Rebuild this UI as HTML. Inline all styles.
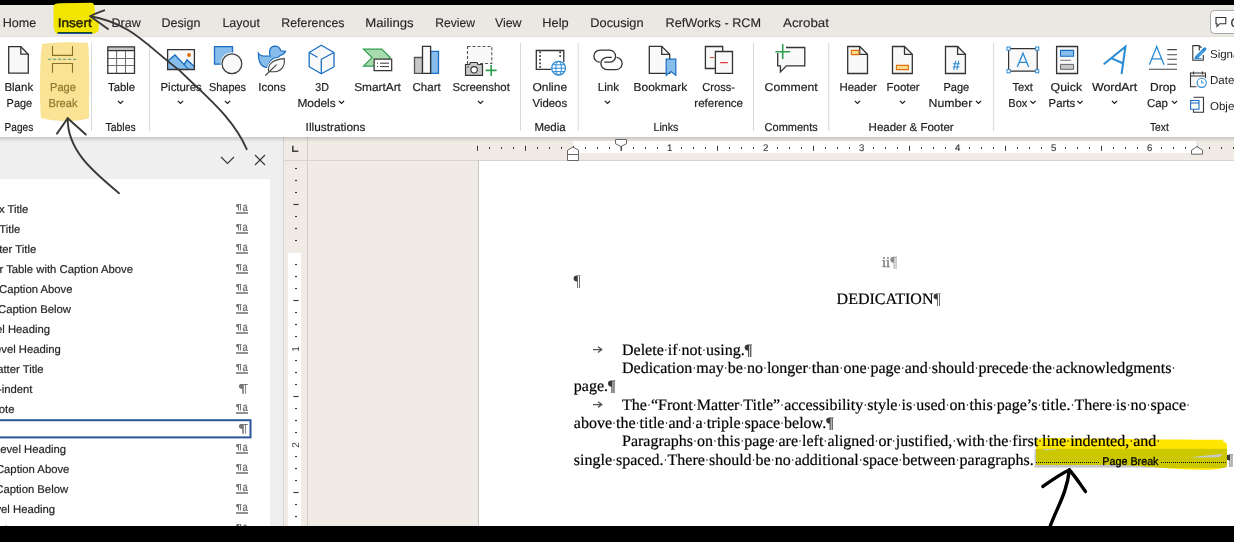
<!DOCTYPE html>
<html><head><meta charset="utf-8"><title>Word</title>
<style>html,body{margin:0;padding:0;width:1234px;height:542px;overflow:hidden;background:#fff}svg{display:block}</style>
</head><body>
<svg width="1234" height="542" viewBox="0 0 1234 542" text-rendering="geometricPrecision">
<rect x="0" y="0" width="1234" height="542" fill="#ffffff" />
<rect x="0" y="5" width="1234" height="31" fill="#ebe7e3" />
<rect x="0" y="36" width="1234" height="1" fill="#e3dfdb" />
<rect x="0" y="37" width="1234" height="100" fill="#ffffff" />
<rect x="0" y="137" width="284" height="389" fill="#efefef" />
<rect x="0" y="179" width="270" height="347" fill="#ffffff" />
<rect x="284" y="137" width="950" height="389" fill="#f0ebe5" />
<rect x="573" y="141" width="623" height="12" fill="#ffffff" />
<rect x="284" y="160" width="950" height="1" fill="#d6d4d2" />
<rect x="283" y="137" width="1" height="389" fill="#d4d4d4" />
<rect x="307" y="137" width="1" height="389" fill="#d2cfcb" />
<rect x="479" y="161" width="755" height="365" fill="#ffffff" />
<rect x="478" y="161" width="1" height="365" fill="#c9c6c2" />
<rect x="288" y="253" width="13" height="273" fill="#ffffff" />
<defs><linearGradient id="shd" x1="0" y1="0" x2="0" y2="1"><stop offset="0" stop-color="#000" stop-opacity="0.16"/><stop offset="1" stop-color="#000" stop-opacity="0"/></linearGradient></defs>
<rect x="0" y="137" width="1234" height="5" fill="url(#shd)" />
<text x="2.8" y="26.7" font-family="Liberation Sans" font-size="12.5" fill="#262626" textLength="33.5" lengthAdjust="spacingAndGlyphs" stroke="#262626" stroke-width="0.12" >Home</text>
<text x="111.6" y="26.7" font-family="Liberation Sans" font-size="12.5" fill="#262626" textLength="29.1" lengthAdjust="spacingAndGlyphs" stroke="#262626" stroke-width="0.12" >Draw</text>
<text x="161.6" y="26.7" font-family="Liberation Sans" font-size="12.5" fill="#262626" textLength="38.9" lengthAdjust="spacingAndGlyphs" stroke="#262626" stroke-width="0.12" >Design</text>
<text x="222.4" y="26.7" font-family="Liberation Sans" font-size="12.5" fill="#262626" textLength="37.5" lengthAdjust="spacingAndGlyphs" stroke="#262626" stroke-width="0.12" >Layout</text>
<text x="281.3" y="26.7" font-family="Liberation Sans" font-size="12.5" fill="#262626" textLength="63.2" lengthAdjust="spacingAndGlyphs" stroke="#262626" stroke-width="0.12" >References</text>
<text x="365.3" y="26.7" font-family="Liberation Sans" font-size="12.5" fill="#262626" textLength="48.4" lengthAdjust="spacingAndGlyphs" stroke="#262626" stroke-width="0.12" >Mailings</text>
<text x="435.2" y="26.7" font-family="Liberation Sans" font-size="12.5" fill="#262626" textLength="39.7" lengthAdjust="spacingAndGlyphs" stroke="#262626" stroke-width="0.12" >Review</text>
<text x="494.9" y="26.7" font-family="Liberation Sans" font-size="12.5" fill="#262626" textLength="26.7" lengthAdjust="spacingAndGlyphs" stroke="#262626" stroke-width="0.12" >View</text>
<text x="542.3" y="26.7" font-family="Liberation Sans" font-size="12.5" fill="#262626" textLength="26.3" lengthAdjust="spacingAndGlyphs" stroke="#262626" stroke-width="0.12" >Help</text>
<text x="590.3" y="26.7" font-family="Liberation Sans" font-size="12.5" fill="#262626" textLength="53.3" lengthAdjust="spacingAndGlyphs" stroke="#262626" stroke-width="0.12" >Docusign</text>
<text x="665.5" y="26.7" font-family="Liberation Sans" font-size="12.5" fill="#262626" textLength="95.5" lengthAdjust="spacingAndGlyphs" stroke="#262626" stroke-width="0.12" >RefWorks - RCM</text>
<text x="783" y="26.7" font-family="Liberation Sans" font-size="12.5" fill="#262626" textLength="46" lengthAdjust="spacingAndGlyphs" stroke="#262626" stroke-width="0.12" >Acrobat</text>
<rect x="0" y="0" width="1234" height="5" fill="#000000" />
<path d="M53.5,6 C54,4 56,3.2 60,3.2 L92,2.8 C94,3.5 94.8,6 94.8,10 L95,19.5 L99,21 L98.5,31 L94,33.8 L57,34 C55,33 54,30 53.6,26 Z" fill="#f2e500"/>
<text x="57.7" y="26.7" font-family="Liberation Sans" font-size="12.5" fill="#2a2700" textLength="34" lengthAdjust="spacingAndGlyphs" stroke="#2a2700" stroke-width="0.5" >Insert</text>
<rect x="57.6" y="32" width="34.7" height="1" fill="#1f4a1a" />
<rect x="57.6" y="33" width="34.7" height="1" fill="#1c55a0" />
<rect x="0" y="526" width="1234" height="16" fill="#000000" />
<rect x="1210.5" y="10.5" width="40" height="23" rx="4" fill="#ffffff" stroke="#a8a8a8"/>
<path d="M1216,17.5 h9.8 v6.2 h-6 l-2.8,2.8 v-2.8 h-1 z" fill="none" stroke="#333" stroke-width="1.1"/>
<text x="1230.5" y="26.7" font-family="Liberation Sans" font-size="12.5" fill="#262626" stroke="#262626" stroke-width="0.2" >Comments</text>
<text x="4.4" y="90.8" font-family="Liberation Sans" font-size="11.5" fill="#1c1c1c" textLength="28.8" lengthAdjust="spacingAndGlyphs" stroke="#1c1c1c" stroke-width="0.18" >Blank</text>
<text x="6.6" y="106.6" font-family="Liberation Sans" font-size="11.5" fill="#1c1c1c" textLength="25.5" lengthAdjust="spacingAndGlyphs" stroke="#1c1c1c" stroke-width="0.18" >Page</text>
<text x="108" y="90.8" font-family="Liberation Sans" font-size="11.5" fill="#1c1c1c" textLength="27" lengthAdjust="spacingAndGlyphs" stroke="#1c1c1c" stroke-width="0.18" >Table</text>
<text x="160.5" y="90.8" font-family="Liberation Sans" font-size="11.5" fill="#1c1c1c" textLength="41.2" lengthAdjust="spacingAndGlyphs" stroke="#1c1c1c" stroke-width="0.18" >Pictures</text>
<text x="209" y="90.8" font-family="Liberation Sans" font-size="11.5" fill="#1c1c1c" textLength="37" lengthAdjust="spacingAndGlyphs" stroke="#1c1c1c" stroke-width="0.18" >Shapes</text>
<text x="258.3" y="90.8" font-family="Liberation Sans" font-size="11.5" fill="#1c1c1c" textLength="27.3" lengthAdjust="spacingAndGlyphs" stroke="#1c1c1c" stroke-width="0.18" >Icons</text>
<text x="315.3" y="90.8" font-family="Liberation Sans" font-size="11.5" fill="#1c1c1c" textLength="13.6" lengthAdjust="spacingAndGlyphs" stroke="#1c1c1c" stroke-width="0.18" >3D</text>
<text x="297.4" y="106.6" font-family="Liberation Sans" font-size="11.5" fill="#1c1c1c" textLength="38.3" lengthAdjust="spacingAndGlyphs" stroke="#1c1c1c" stroke-width="0.18" >Models</text>
<text x="354.2" y="90.8" font-family="Liberation Sans" font-size="11.5" fill="#1c1c1c" textLength="46.7" lengthAdjust="spacingAndGlyphs" stroke="#1c1c1c" stroke-width="0.18" >SmartArt</text>
<text x="412.5" y="90.8" font-family="Liberation Sans" font-size="11.5" fill="#1c1c1c" textLength="28.2" lengthAdjust="spacingAndGlyphs" stroke="#1c1c1c" stroke-width="0.18" >Chart</text>
<text x="452.4" y="90.8" font-family="Liberation Sans" font-size="11.5" fill="#1c1c1c" textLength="57.4" lengthAdjust="spacingAndGlyphs" stroke="#1c1c1c" stroke-width="0.18" >Screenshot</text>
<text x="532.5" y="90.8" font-family="Liberation Sans" font-size="11.5" fill="#1c1c1c" textLength="34.6" lengthAdjust="spacingAndGlyphs" stroke="#1c1c1c" stroke-width="0.18" >Online</text>
<text x="532.5" y="106.6" font-family="Liberation Sans" font-size="11.5" fill="#1c1c1c" textLength="34.6" lengthAdjust="spacingAndGlyphs" stroke="#1c1c1c" stroke-width="0.18" >Videos</text>
<text x="597.7" y="90.8" font-family="Liberation Sans" font-size="11.5" fill="#1c1c1c" textLength="21.3" lengthAdjust="spacingAndGlyphs" stroke="#1c1c1c" stroke-width="0.18" >Link</text>
<text x="633.6" y="90.8" font-family="Liberation Sans" font-size="11.5" fill="#1c1c1c" textLength="53.5" lengthAdjust="spacingAndGlyphs" stroke="#1c1c1c" stroke-width="0.18" >Bookmark</text>
<text x="702.3" y="90.8" font-family="Liberation Sans" font-size="11.5" fill="#1c1c1c" textLength="32.7" lengthAdjust="spacingAndGlyphs" stroke="#1c1c1c" stroke-width="0.18" >Cross-</text>
<text x="694.3" y="106.6" font-family="Liberation Sans" font-size="11.5" fill="#1c1c1c" textLength="48.7" lengthAdjust="spacingAndGlyphs" stroke="#1c1c1c" stroke-width="0.18" >reference</text>
<text x="764.6" y="90.8" font-family="Liberation Sans" font-size="11.5" fill="#1c1c1c" textLength="53.1" lengthAdjust="spacingAndGlyphs" stroke="#1c1c1c" stroke-width="0.18" >Comment</text>
<text x="839.4" y="90.8" font-family="Liberation Sans" font-size="11.5" fill="#1c1c1c" textLength="37.4" lengthAdjust="spacingAndGlyphs" stroke="#1c1c1c" stroke-width="0.18" >Header</text>
<text x="886.6" y="90.8" font-family="Liberation Sans" font-size="11.5" fill="#1c1c1c" textLength="33" lengthAdjust="spacingAndGlyphs" stroke="#1c1c1c" stroke-width="0.18" >Footer</text>
<text x="943.4" y="90.8" font-family="Liberation Sans" font-size="11.5" fill="#1c1c1c" textLength="25.8" lengthAdjust="spacingAndGlyphs" stroke="#1c1c1c" stroke-width="0.18" >Page</text>
<text x="928.5" y="106.6" font-family="Liberation Sans" font-size="11.5" fill="#1c1c1c" textLength="43.8" lengthAdjust="spacingAndGlyphs" stroke="#1c1c1c" stroke-width="0.18" >Number</text>
<text x="1012.4" y="90.8" font-family="Liberation Sans" font-size="11.5" fill="#1c1c1c" textLength="20.4" lengthAdjust="spacingAndGlyphs" stroke="#1c1c1c" stroke-width="0.18" >Text</text>
<text x="1008.3" y="106.6" font-family="Liberation Sans" font-size="11.5" fill="#1c1c1c" textLength="19" lengthAdjust="spacingAndGlyphs" stroke="#1c1c1c" stroke-width="0.18" >Box</text>
<text x="1050.6" y="90.8" font-family="Liberation Sans" font-size="11.5" fill="#1c1c1c" textLength="31.6" lengthAdjust="spacingAndGlyphs" stroke="#1c1c1c" stroke-width="0.18" >Quick</text>
<text x="1048.6" y="106.6" font-family="Liberation Sans" font-size="11.5" fill="#1c1c1c" textLength="26.5" lengthAdjust="spacingAndGlyphs" stroke="#1c1c1c" stroke-width="0.18" >Parts</text>
<text x="1091.9" y="90.8" font-family="Liberation Sans" font-size="11.5" fill="#1c1c1c" textLength="45.3" lengthAdjust="spacingAndGlyphs" stroke="#1c1c1c" stroke-width="0.18" >WordArt</text>
<text x="1150" y="90.8" font-family="Liberation Sans" font-size="11.5" fill="#1c1c1c" textLength="26" lengthAdjust="spacingAndGlyphs" stroke="#1c1c1c" stroke-width="0.18" >Drop</text>
<text x="1147" y="106.6" font-family="Liberation Sans" font-size="11.5" fill="#1c1c1c" textLength="21" lengthAdjust="spacingAndGlyphs" stroke="#1c1c1c" stroke-width="0.18" >Cap</text>
<text x="4.6" y="130.7" font-family="Liberation Sans" font-size="11.5" fill="#1c1c1c" textLength="28.6" lengthAdjust="spacingAndGlyphs" stroke="#1c1c1c" stroke-width="0.18" >Pages</text>
<text x="105.6" y="130.7" font-family="Liberation Sans" font-size="11.5" fill="#1c1c1c" textLength="30" lengthAdjust="spacingAndGlyphs" stroke="#1c1c1c" stroke-width="0.18" >Tables</text>
<text x="305.6" y="130.7" font-family="Liberation Sans" font-size="11.5" fill="#1c1c1c" textLength="59.9" lengthAdjust="spacingAndGlyphs" stroke="#1c1c1c" stroke-width="0.18" >Illustrations</text>
<text x="534.4" y="130.7" font-family="Liberation Sans" font-size="11.5" fill="#1c1c1c" textLength="31.2" lengthAdjust="spacingAndGlyphs" stroke="#1c1c1c" stroke-width="0.18" >Media</text>
<text x="653.5" y="130.7" font-family="Liberation Sans" font-size="11.5" fill="#1c1c1c" textLength="24.9" lengthAdjust="spacingAndGlyphs" stroke="#1c1c1c" stroke-width="0.18" >Links</text>
<text x="764.6" y="130.7" font-family="Liberation Sans" font-size="11.5" fill="#1c1c1c" textLength="53.1" lengthAdjust="spacingAndGlyphs" stroke="#1c1c1c" stroke-width="0.18" >Comments</text>
<text x="868.6" y="130.7" font-family="Liberation Sans" font-size="11.5" fill="#1c1c1c" textLength="85.1" lengthAdjust="spacingAndGlyphs" stroke="#1c1c1c" stroke-width="0.18" >Header &amp; Footer</text>
<text x="1150" y="130.7" font-family="Liberation Sans" font-size="11.5" fill="#1c1c1c" textLength="18.8" lengthAdjust="spacingAndGlyphs" stroke="#1c1c1c" stroke-width="0.18" >Text</text>
<text x="1210" y="58" font-family="Liberation Sans" font-size="11.5" fill="#1c1c1c" >Signature Line</text>
<text x="1210" y="84" font-family="Liberation Sans" font-size="11.5" fill="#1c1c1c" >Date &amp; Time</text>
<text x="1210" y="110" font-family="Liberation Sans" font-size="11.5" fill="#1c1c1c" >Object</text>
<rect x="91.0" y="43" width="1" height="88" fill="#d9d9d9" />
<rect x="149.0" y="43" width="1" height="88" fill="#d9d9d9" />
<rect x="520.0" y="43" width="1" height="88" fill="#d9d9d9" />
<rect x="577.7" y="43" width="1" height="88" fill="#d9d9d9" />
<rect x="753.0" y="43" width="1" height="88" fill="#d9d9d9" />
<rect x="828.2" y="43" width="1" height="88" fill="#d9d9d9" />
<rect x="993.1" y="43" width="1" height="88" fill="#d9d9d9" />
<path d="M117.9,100.9 L120.5,103.5 L123.1,100.9" fill="none" stroke="#1c1c1c" stroke-width="1.2"/>
<path d="M177.9,100.9 L180.5,103.5 L183.1,100.9" fill="none" stroke="#1c1c1c" stroke-width="1.2"/>
<path d="M224.9,100.9 L227.5,103.5 L230.1,100.9" fill="none" stroke="#1c1c1c" stroke-width="1.2"/>
<path d="M338.9,100.9 L341.5,103.5 L344.1,100.9" fill="none" stroke="#1c1c1c" stroke-width="1.2"/>
<path d="M477.9,100.9 L480.5,103.5 L483.1,100.9" fill="none" stroke="#1c1c1c" stroke-width="1.2"/>
<path d="M604.9,100.9 L607.5,103.5 L610.1,100.9" fill="none" stroke="#1c1c1c" stroke-width="1.2"/>
<path d="M854.9,100.9 L857.5,103.5 L860.1,100.9" fill="none" stroke="#1c1c1c" stroke-width="1.2"/>
<path d="M899.9,100.9 L902.5,103.5 L905.1,100.9" fill="none" stroke="#1c1c1c" stroke-width="1.2"/>
<path d="M975.9,100.9 L978.5,103.5 L981.1,100.9" fill="none" stroke="#1c1c1c" stroke-width="1.2"/>
<path d="M1030.4,100.9 L1033,103.5 L1035.6,100.9" fill="none" stroke="#1c1c1c" stroke-width="1.2"/>
<path d="M1077.4,100.9 L1080,103.5 L1082.6,100.9" fill="none" stroke="#1c1c1c" stroke-width="1.2"/>
<path d="M1111.9,100.9 L1114.5,103.5 L1117.1,100.9" fill="none" stroke="#1c1c1c" stroke-width="1.2"/>
<path d="M1171.9,100.9 L1174.5,103.5 L1177.1,100.9" fill="none" stroke="#1c1c1c" stroke-width="1.2"/>
<path d="M8.7,46.7 H20.8 L28.3,54.2 V73.1 H8.7 Z" fill="#f9f9f9" stroke="#333333" stroke-width="1.3" stroke-linejoin="miter" />
<path d="M20.8,46.7 V54.2 H28.3" fill="none" stroke="#333333" stroke-width="1.3" stroke-linejoin="miter" />
<rect x="107.5" y="46.5" width="27" height="4" fill="#c6c6c6" />
<path d="M108,58.5 H134.3 M108,65.5 H134.3 M116.6,51 V73 M125.5,51 V73" fill="none" stroke="#707070" stroke-width="1.1" stroke-linejoin="miter" />
<path d="M107.8,46.8 H134.5 V73.3 H107.8 Z M107.8,50.6 H134.5" fill="none" stroke="#333333" stroke-width="1.3" stroke-linejoin="miter" />
<rect x="168" y="50" width="26" height="19" fill="#f9f9f9" />
<path d="M168,61 L175,55 L188.5,69.3 M184,64.5 L187,60 L194.2,66.5" fill="none" stroke="#1b6ec2" stroke-width="1.2" stroke-linejoin="miter" />
<path d="M168,61 L175,55 L184,64.5 L187,60 L194.2,66.5 V69.3 H168 Z" fill="#86bdea"/>
<path d="M168,61 L175,55 L188.5,69.3 M184.5,64.5 L187,60 L194.2,66.5" fill="none" stroke="#1b6ec2" stroke-width="1.2" stroke-linejoin="miter" />
<path d="M167.6,49.6 H194.4 V69.5 H167.6 Z" fill="none" stroke="#333333" stroke-width="1.3" stroke-linejoin="miter" />
<circle cx="189" cy="55" r="2" fill="#e0700f"/>
<path d="M214.5,46.7 H232.5 V55 A10,10 0 0 0 222,64.2 H214.5 Z" fill="#86bdea" stroke="#1b6ec2" stroke-width="1.3"/>
<circle cx="231.9" cy="63.8" r="11.3" fill="#ffffff"/>
<circle cx="231.9" cy="63.8" r="9.9" fill="#f9f9f9" stroke="#444" stroke-width="1.3"/>
<path d="M258.4,53.2 C259.5,55.2 262,56.2 266,56.2 L270.5,56 C269.3,54.5 269.3,52.5 269.6,50.8 C270.3,47.3 273,46.2 275.4,46.2 C278.5,46.4 280.2,48.6 280.8,50.8 L285.5,51.3 C284.5,53.5 282.5,55 280,55.5 C279,57.5 276.5,58 274,58 C270.5,60 268.5,63 267.2,67.5 C261,67 258.3,62 258.4,53.2 Z" fill="#86bdea" stroke="#1b6ec2" stroke-width="1.2"/>
<path d="M268.6,71 C267.5,64.5 272,59.8 284.2,58.6 C285.2,66 281.5,71.5 274,71.8 C271.5,71.9 269.8,71.6 268.6,71 Z" fill="#f9f9f9" stroke="#f9f9f9" stroke-width="3"/>
<path d="M268.6,71 C267.5,64.5 272,59.8 284.2,58.6 C285.2,66 281.5,71.5 274,71.8 C271.5,71.9 269.8,71.6 268.6,71 Z M265.3,75.5 L276.6,64.6" fill="none" stroke="#444" stroke-width="1.1"/>
<path d="M321.3,45.2 L334,52.5 V66.7 L321.3,73.8 L309.2,66.7 V52.5 Z" fill="#f9f9f9" stroke="#1b6ec2" stroke-width="1.3" stroke-linejoin="round"/>
<path d="M309.2,52.5 L317.5,57.3 M321.3,59.3 L334,52.5 M321.3,59.3 V73.8" fill="none" stroke="#1b6ec2" stroke-width="1.3" stroke-linejoin="miter" />
<path d="M363.5,49.1 H381.7 L390.3,57.6 L381.7,66.1 H363.5 L372,57.6 Z" fill="#a8dcae" stroke="#2f9e4f" stroke-width="1.2"/>
<path d="M374.1,59.1 H391.7 V70.6 H374.1 Z" fill="#ffffff" stroke="#333333" stroke-width="1.2" stroke-linejoin="miter" />
<path d="M380,63.2 H389 M380,66.6 H389" fill="none" stroke="#333333" stroke-width="1" stroke-linejoin="miter" />
<rect x="377" y="62.7" width="1" height="1" fill="#333333" />
<rect x="377" y="66.1" width="1" height="1" fill="#333333" />
<path d="M414.5,57.5 H422.5 V73.3 H414.5 Z" fill="#c8c8c8" stroke="#555" stroke-width="1.3" stroke-linejoin="miter" />
<path d="M430.6,51.3 H438.5 V73.3 H430.6 Z" fill="#86bdea" stroke="#1b6ec2" stroke-width="1.3" stroke-linejoin="miter" />
<path d="M422.5,46.4 H430.6 V73.3 H422.5 Z" fill="#f9f9f9" stroke="#333333" stroke-width="1.3" stroke-linejoin="miter" />
<rect x="467.5" y="46.5" width="24.3" height="17" fill="#f9f9f9" stroke="#555" stroke-width="1.1" stroke-dasharray="3,2"/>
<path d="M465.5,64.5 H469.5 L470.5,62.5 H477 L478,64.5 H482.5 V75.3 H465.5 Z" fill="#c8c8c8" stroke="#333333" stroke-width="1.2"/>
<circle cx="474.1" cy="69.8" r="3.2" fill="#fff" stroke="#333333" stroke-width="1.1"/>
<rect x="467.3" y="66.2" width="1.3" height="1.3" fill="#333333" />
<path d="M485.7,70.4 H496.6 M491.2,64.9 V75.9" fill="none" stroke="#2f9e4f" stroke-width="1.6" stroke-linejoin="miter" />
<path d="M563.8,62 V50.5 H536.3 V69.3 H551" fill="none" stroke="#333333" stroke-width="1.3" stroke-linejoin="miter" />
<rect x="539.2" y="51.5" width="1.7" height="1.7" fill="#333333" />
<rect x="539.2" y="55.2" width="1.7" height="1.7" fill="#333333" />
<rect x="539.2" y="58.800000000000004" width="1.7" height="1.7" fill="#333333" />
<rect x="539.2" y="62.5" width="1.7" height="1.7" fill="#333333" />
<rect x="539.2" y="66.10000000000001" width="1.7" height="1.7" fill="#333333" />
<rect x="559.3" y="51.5" width="1.7" height="1.7" fill="#333333" />
<rect x="559.3" y="55.2" width="1.7" height="1.7" fill="#333333" />
<circle cx="558.6" cy="68.2" r="7.6" fill="#fff"/>
<circle cx="558.6" cy="68.2" r="6.9" fill="none" stroke="#2a8ad4" stroke-width="1.3"/>
<path d="M552,68.2 H565.2 M553.2,64.8 H564 M553.2,71.6 H564" fill="none" stroke="#2a8ad4" stroke-width="1" stroke-linejoin="miter" />
<ellipse cx="558.6" cy="68.2" rx="2.8" ry="6.9" fill="none" stroke="#2a8ad4" stroke-width="1"/>
<path d="M604.2,62.2 H609.5 A6.05,6.05 0 0 0 609.5,50.1 H600 A6.05,6.05 0 0 0 599.9,62.2" fill="none" stroke="#333333" stroke-width="1.3" stroke-linejoin="miter" />
<path d="M611.9,57.4 H607 A6.1,6.1 0 0 0 607,69.6 H615.6 A6.1,6.1 0 0 0 616.5,57.4" fill="none" stroke="#333333" stroke-width="1.3" stroke-linejoin="miter" />
<path d="M649.3,46.3 H661.7 L669.7,54.3 V73.3 H649.3 Z" fill="#f9f9f9" stroke="#333333" stroke-width="1.3" stroke-linejoin="miter" />
<path d="M661.7,46.3 V54.3 H669.7" fill="none" stroke="#333333" stroke-width="1.3" stroke-linejoin="miter" />
<path d="M666.2,59.2 H675.8 V75.3 L671,71.6 L666.2,75.3 Z" fill="#86bdea" stroke="#1b6ec2" stroke-width="1.2"/>
<path d="M666.2,60 V73.3" stroke="#f9f9f9" stroke-width="0"/>
<path d="M722.7,51 V46.5 H705.4 V68.5 H715" fill="#f9f9f9" stroke="#333333" stroke-width="1.3" stroke-linejoin="miter" />
<path d="M715.4,51.5 H732.5 V73.4 H715.4 Z" fill="#f9f9f9" stroke="#333333" stroke-width="1.3" stroke-linejoin="miter" />
<path d="M710,57.5 H714 M720.1,62.6 H727.9" fill="none" stroke="#e03a3a" stroke-width="1.1" stroke-linejoin="miter" />
<path d="M786,47.5 H804.8 V65.8 H786.4 L780.4,72 V65.8 H777.7 V53" fill="#f9f9f9" stroke="#333333" stroke-width="1.3" stroke-linejoin="miter" />
<path d="M775.3,51.7 H790.1 M782.7,44.1 V59" fill="none" stroke="#2f9e4f" stroke-width="1.6" stroke-linejoin="miter" />
<path d="M847.7,46.5 H859.7 L867.5,54.3 V73.5 H847.7 Z" fill="#f9f9f9" stroke="#333333" stroke-width="1.3" stroke-linejoin="miter" />
<path d="M859.7,46.5 V54.3 H867.5" fill="none" stroke="#333333" stroke-width="1.3" stroke-linejoin="miter" />
<path d="M851.3,50.4 H859 V54.6 H851.3 Z" fill="#f8d98a" stroke="#e0700f" stroke-width="1.1" stroke-linejoin="miter" />
<path d="M892.5,46.5 H904.5 L912.3,54.3 V73.5 H892.5 Z" fill="#f9f9f9" stroke="#333333" stroke-width="1.3" stroke-linejoin="miter" />
<path d="M904.5,46.5 V54.3 H912.3" fill="none" stroke="#333333" stroke-width="1.3" stroke-linejoin="miter" />
<path d="M896.4,65.4 H908.4 V69.6 H896.4 Z" fill="#f8d98a" stroke="#e0700f" stroke-width="1.1" stroke-linejoin="miter" />
<path d="M945.5,46.5 H957.6 L965.4,54.3 V73.5 H945.5 Z" fill="#f9f9f9" stroke="#333333" stroke-width="1.3" stroke-linejoin="miter" />
<path d="M957.6,46.5 V54.3 H965.4" fill="none" stroke="#333333" stroke-width="1.3" stroke-linejoin="miter" />
<text x="956.2" y="70.3" font-family="Liberation Sans" font-size="13.5" fill="#2a8ad4" font-weight="bold" text-anchor="middle" >#</text>
<path d="M1008.6,48.6 H1037.2 V71.2 H1008.6 Z" fill="#f9f9f9" stroke="#333333" stroke-width="1.2" stroke-linejoin="miter" />
<rect x="1007.0" y="47.0" width="3.2" height="3.2" fill="#fff" stroke="#2a8ad4" stroke-width="1"/>
<rect x="1035.6000000000001" y="47.0" width="3.2" height="3.2" fill="#fff" stroke="#2a8ad4" stroke-width="1"/>
<rect x="1007.0" y="69.60000000000001" width="3.2" height="3.2" fill="#fff" stroke="#2a8ad4" stroke-width="1"/>
<rect x="1035.6000000000001" y="69.60000000000001" width="3.2" height="3.2" fill="#fff" stroke="#2a8ad4" stroke-width="1"/>
<path d="M1017.3,66.9 L1023,53.3 L1028.7,66.9 M1019.2,62.3 H1026.8" fill="none" stroke="#2a8ad4" stroke-width="1.3" stroke-linejoin="miter" />
<path d="M1056.6,46.5 H1077.6 V73.5 H1056.6 Z" fill="#f9f9f9" stroke="#333333" stroke-width="1.3" stroke-linejoin="miter" />
<path d="M1060.5,50.4 H1073.6 V56.3 H1060.5 Z" fill="#86bdea" stroke="#1b6ec2" stroke-width="1.1" stroke-linejoin="miter" />
<path d="M1060.3,60.3 H1070.8" fill="none" stroke="#777" stroke-width="1" stroke-linejoin="miter" />
<path d="M1060.5,64.4 H1073.6 V69.3 H1060.5 Z" fill="#c8c8c8" stroke="#666" stroke-width="1" stroke-linejoin="miter" />
<path d="M1104.3,63.7 L1125.4,46.8 L1121.7,73.2 M1111.7,58.4 L1122.8,63.2" fill="none" stroke="#2a8ad4" stroke-width="2.1" stroke-linejoin="miter" stroke-linecap="round" stroke-linejoin="round"/>
<path d="M1149.4,64.8 L1156.7,46.4 L1164,64.8 M1151.8,58.8 H1161.6" fill="none" stroke="#2a8ad4" stroke-width="1.3" stroke-linejoin="miter" />
<path d="M1167.3,49.6 H1176.9 M1167.3,54.7 H1176.9 M1167.3,59.2 H1176.9 M1167.3,64.3 H1176.9 M1149,69.2 H1177" fill="none" stroke="#444" stroke-width="1.1" stroke-linejoin="miter" />
<path d="M1199.3,45.6 H1192.8 V60.3 H1203.3 V55" fill="none" stroke="#333333" stroke-width="1.1" stroke-linejoin="miter" />
<path d="M1199.3,45.6 V50.5 M1199.3,45.6 L1201.6,47.8" fill="none" stroke="#333333" stroke-width="1.1" stroke-linejoin="miter" />
<path d="M1196.5,57.3 L1204.8,49" stroke="#2a8ad4" stroke-width="3.2" stroke-linecap="round"/>
<path d="M1198.5,55.3 L1203.6,50.2" stroke="#ffffff" stroke-width="0.8" stroke-dasharray="0.8,1"/>
<path d="M1195.2,58.6 L1197,55.5 L1198.5,57.2 Z" fill="#2a8ad4"/>
<path d="M1194.3,58.6 H1201.6" fill="none" stroke="#2a8ad4" stroke-width="1.1" stroke-linejoin="miter" />
<path d="M1205.5,78 V73 H1190.5 V86.7 H1196.5 M1190.5,76 H1205.5" fill="#f9f9f9" stroke="#333333" stroke-width="1.1" stroke-linejoin="miter" />
<path d="M1193.5,71.5 V74.5 M1202.5,71.5 V74.5" fill="none" stroke="#333333" stroke-width="1.1" stroke-linejoin="miter" />
<circle cx="1201.7" cy="82.8" r="4.6" fill="#fff" stroke="#2a8ad4" stroke-width="1.1"/>
<path d="M1201.7,80.3 V83 H1203.8" fill="none" stroke="#2a8ad4" stroke-width="1" stroke-linejoin="miter" />
<path d="M1193.5,97.3 H1203.5 V112.3 H1193.5 V109.5" fill="none" stroke="#333333" stroke-width="1.1" stroke-linejoin="miter" />
<path d="M1190.6,100.5 H1199 V109.2 H1190.6 Z M1190.6,103 H1199" fill="#f9f9f9" stroke="#1b6ec2" stroke-width="1.1" stroke-linejoin="miter" />
<path d="M221,157 L227.5,163.5 L234,157" fill="none" stroke="#333" stroke-width="1.1"/>
<path d="M255,155 L265,165 M265,155 L255,165" fill="none" stroke="#333" stroke-width="1.1"/>
<text x="28.4" y="212.8" font-family="Liberation Sans" font-size="11.3" fill="#262626" text-anchor="end" stroke="#262626" stroke-width="0.2" >Appendix Title</text>
<path d="M237.3,204.10000000000002 H241.3 V204.8 H241 V210.60000000000002 H240 V204.8 H239 V210.60000000000002 H238 V207.4 C236.7,207.4 236,206.60000000000002 236,205.8 C236,204.9 236.6,204.10000000000002 237.3,204.10000000000002 Z" fill="#767676"/>
<text x="242.6" y="210.60000000000002" font-family="Liberation Sans" font-size="12" fill="#767676" textLength="5.3" lengthAdjust="spacingAndGlyphs" font-weight="bold" >a</text>
<rect x="236" y="212.20000000000002" width="12" height="1.6" fill="#767676" />
<text x="20.2" y="232.8" font-family="Liberation Sans" font-size="11.3" fill="#262626" text-anchor="end" stroke="#262626" stroke-width="0.2" >Title</text>
<path d="M237.3,224.10000000000002 H241.3 V224.8 H241 V230.60000000000002 H240 V224.8 H239 V230.60000000000002 H238 V227.4 C236.7,227.4 236,226.60000000000002 236,225.8 C236,224.9 236.6,224.10000000000002 237.3,224.10000000000002 Z" fill="#767676"/>
<text x="242.6" y="230.60000000000002" font-family="Liberation Sans" font-size="12" fill="#767676" textLength="5.3" lengthAdjust="spacingAndGlyphs" font-weight="bold" >a</text>
<rect x="236" y="232.20000000000002" width="12" height="1.6" fill="#767676" />
<text x="36.2" y="252.8" font-family="Liberation Sans" font-size="11.3" fill="#262626" text-anchor="end" stroke="#262626" stroke-width="0.2" >Chapter Title</text>
<path d="M237.3,244.10000000000002 H241.3 V244.8 H241 V250.60000000000002 H240 V244.8 H239 V250.60000000000002 H238 V247.4 C236.7,247.4 236,246.60000000000002 236,245.8 C236,244.9 236.6,244.10000000000002 237.3,244.10000000000002 Z" fill="#767676"/>
<text x="242.6" y="250.60000000000002" font-family="Liberation Sans" font-size="12" fill="#767676" textLength="5.3" lengthAdjust="spacingAndGlyphs" font-weight="bold" >a</text>
<rect x="236" y="252.20000000000002" width="12" height="1.6" fill="#767676" />
<text x="133" y="272.8" font-family="Liberation Sans" font-size="11.3" fill="#262626" text-anchor="end" stroke="#262626" stroke-width="0.2" >Figure or Table with Caption Above</text>
<path d="M237.3,264.1 H241.3 V264.8 H241 V270.6 H240 V264.8 H239 V270.6 H238 V267.40000000000003 C236.7,267.40000000000003 236,266.6 236,265.8 C236,264.90000000000003 236.6,264.1 237.3,264.1 Z" fill="#767676"/>
<text x="242.6" y="270.6" font-family="Liberation Sans" font-size="12" fill="#767676" textLength="5.3" lengthAdjust="spacingAndGlyphs" font-weight="bold" >a</text>
<rect x="236" y="272.2" width="12" height="1.6" fill="#767676" />
<text x="72.5" y="292.8" font-family="Liberation Sans" font-size="11.3" fill="#262626" text-anchor="end" stroke="#262626" stroke-width="0.2" >Figure Caption Above</text>
<path d="M237.3,284.1 H241.3 V284.8 H241 V290.6 H240 V284.8 H239 V290.6 H238 V287.40000000000003 C236.7,287.40000000000003 236,286.6 236,285.8 C236,284.90000000000003 236.6,284.1 237.3,284.1 Z" fill="#767676"/>
<text x="242.6" y="290.6" font-family="Liberation Sans" font-size="12" fill="#767676" textLength="5.3" lengthAdjust="spacingAndGlyphs" font-weight="bold" >a</text>
<rect x="236" y="292.2" width="12" height="1.6" fill="#767676" />
<text x="70.9" y="312.8" font-family="Liberation Sans" font-size="11.3" fill="#262626" text-anchor="end" stroke="#262626" stroke-width="0.2" >Figure Caption Below</text>
<path d="M237.3,304.1 H241.3 V304.8 H241 V310.6 H240 V304.8 H239 V310.6 H238 V307.40000000000003 C236.7,307.40000000000003 236,306.6 236,305.8 C236,304.90000000000003 236.6,304.1 237.3,304.1 Z" fill="#767676"/>
<text x="242.6" y="310.6" font-family="Liberation Sans" font-size="12" fill="#767676" textLength="5.3" lengthAdjust="spacingAndGlyphs" font-weight="bold" >a</text>
<rect x="236" y="312.2" width="12" height="1.6" fill="#767676" />
<text x="50" y="332.8" font-family="Liberation Sans" font-size="11.3" fill="#262626" text-anchor="end" stroke="#262626" stroke-width="0.2" >Second Level Heading</text>
<path d="M237.3,324.1 H241.3 V324.8 H241 V330.6 H240 V324.8 H239 V330.6 H238 V327.40000000000003 C236.7,327.40000000000003 236,326.6 236,325.8 C236,324.90000000000003 236.6,324.1 237.3,324.1 Z" fill="#767676"/>
<text x="242.6" y="330.6" font-family="Liberation Sans" font-size="12" fill="#767676" textLength="5.3" lengthAdjust="spacingAndGlyphs" font-weight="bold" >a</text>
<rect x="236" y="332.2" width="12" height="1.6" fill="#767676" />
<text x="60.9" y="352.8" font-family="Liberation Sans" font-size="11.3" fill="#262626" text-anchor="end" stroke="#262626" stroke-width="0.2" >Third Level Heading</text>
<path d="M237.3,344.1 H241.3 V344.8 H241 V350.6 H240 V344.8 H239 V350.6 H238 V347.40000000000003 C236.7,347.40000000000003 236,346.6 236,345.8 C236,344.90000000000003 236.6,344.1 237.3,344.1 Z" fill="#767676"/>
<text x="242.6" y="350.6" font-family="Liberation Sans" font-size="12" fill="#767676" textLength="5.3" lengthAdjust="spacingAndGlyphs" font-weight="bold" >a</text>
<rect x="236" y="352.2" width="12" height="1.6" fill="#767676" />
<text x="43.6" y="372.8" font-family="Liberation Sans" font-size="11.3" fill="#262626" text-anchor="end" stroke="#262626" stroke-width="0.2" >Front Matter Title</text>
<path d="M237.3,364.1 H241.3 V364.8 H241 V370.6 H240 V364.8 H239 V370.6 H238 V367.40000000000003 C236.7,367.40000000000003 236,366.6 236,365.8 C236,364.90000000000003 236.6,364.1 237.3,364.1 Z" fill="#767676"/>
<text x="242.6" y="370.6" font-family="Liberation Sans" font-size="12" fill="#767676" textLength="5.3" lengthAdjust="spacingAndGlyphs" font-weight="bold" >a</text>
<rect x="236" y="372.2" width="12" height="1.6" fill="#767676" />
<text x="32.5" y="392.8" font-family="Liberation Sans" font-size="11.3" fill="#262626" text-anchor="end" stroke="#262626" stroke-width="0.2" >Block-indent</text>
<path d="M240.5,384.0 H247.8 V384.90000000000003 H246 V393.8 H245.1 V384.90000000000003 H243.8 V393.8 H242.2 V388.8 C240,388.8 238.9,387.8 238.9,386.40000000000003 C238.9,385.0 239.8,384.0 240.5,384.0 Z" fill="#767676"/>
<text x="14.5" y="412.8" font-family="Liberation Sans" font-size="11.3" fill="#262626" text-anchor="end" stroke="#262626" stroke-width="0.2" >Footnote</text>
<path d="M237.3,404.1 H241.3 V404.8 H241 V410.6 H240 V404.8 H239 V410.6 H238 V407.40000000000003 C236.7,407.40000000000003 236,406.6 236,405.8 C236,404.90000000000003 236.6,404.1 237.3,404.1 Z" fill="#767676"/>
<text x="242.6" y="410.6" font-family="Liberation Sans" font-size="12" fill="#767676" textLength="5.3" lengthAdjust="spacingAndGlyphs" font-weight="bold" >a</text>
<rect x="236" y="412.2" width="12" height="1.6" fill="#767676" />
<path d="M240.5,424.0 H247.8 V424.90000000000003 H246 V433.8 H245.1 V424.90000000000003 H243.8 V433.8 H242.2 V428.8 C240,428.8 238.9,427.8 238.9,426.40000000000003 C238.9,425.0 239.8,424.0 240.5,424.0 Z" fill="#767676"/>
<text x="66.1" y="452.8" font-family="Liberation Sans" font-size="11.3" fill="#262626" text-anchor="end" stroke="#262626" stroke-width="0.2" >Fourth Level Heading</text>
<path d="M237.3,444.1 H241.3 V444.8 H241 V450.6 H240 V444.8 H239 V450.6 H238 V447.40000000000003 C236.7,447.40000000000003 236,446.6 236,445.8 C236,444.90000000000003 236.6,444.1 237.3,444.1 Z" fill="#767676"/>
<text x="242.6" y="450.6" font-family="Liberation Sans" font-size="12" fill="#767676" textLength="5.3" lengthAdjust="spacingAndGlyphs" font-weight="bold" >a</text>
<rect x="236" y="452.2" width="12" height="1.6" fill="#767676" />
<text x="69.4" y="472.8" font-family="Liberation Sans" font-size="11.3" fill="#262626" text-anchor="end" stroke="#262626" stroke-width="0.2" >Table Caption Above</text>
<path d="M237.3,464.1 H241.3 V464.8 H241 V470.6 H240 V464.8 H239 V470.6 H238 V467.40000000000003 C236.7,467.40000000000003 236,466.6 236,465.8 C236,464.90000000000003 236.6,464.1 237.3,464.1 Z" fill="#767676"/>
<text x="242.6" y="470.6" font-family="Liberation Sans" font-size="12" fill="#767676" textLength="5.3" lengthAdjust="spacingAndGlyphs" font-weight="bold" >a</text>
<rect x="236" y="472.2" width="12" height="1.6" fill="#767676" />
<text x="68.1" y="492.8" font-family="Liberation Sans" font-size="11.3" fill="#262626" text-anchor="end" stroke="#262626" stroke-width="0.2" >Table Caption Below</text>
<path d="M237.3,484.1 H241.3 V484.8 H241 V490.6 H240 V484.8 H239 V490.6 H238 V487.40000000000003 C236.7,487.40000000000003 236,486.6 236,485.8 C236,484.90000000000003 236.6,484.1 237.3,484.1 Z" fill="#767676"/>
<text x="242.6" y="490.6" font-family="Liberation Sans" font-size="12" fill="#767676" textLength="5.3" lengthAdjust="spacingAndGlyphs" font-weight="bold" >a</text>
<rect x="236" y="492.2" width="12" height="1.6" fill="#767676" />
<text x="55.1" y="512.8" font-family="Liberation Sans" font-size="11.3" fill="#262626" text-anchor="end" stroke="#262626" stroke-width="0.2" >Fifth Level Heading</text>
<path d="M237.3,504.09999999999997 H241.3 V504.79999999999995 H241 V510.59999999999997 H240 V504.79999999999995 H239 V510.59999999999997 H238 V507.4 C236.7,507.4 236,506.59999999999997 236,505.79999999999995 C236,504.9 236.6,504.09999999999997 237.3,504.09999999999997 Z" fill="#767676"/>
<text x="242.6" y="510.59999999999997" font-family="Liberation Sans" font-size="12" fill="#767676" textLength="5.3" lengthAdjust="spacingAndGlyphs" font-weight="bold" >a</text>
<rect x="236" y="512.1999999999999" width="12" height="1.6" fill="#767676" />
<text x="8" y="532.8" font-family="Liberation Sans" font-size="11.3" fill="#262626" text-anchor="end" stroke="#262626" stroke-width="0.2" >List</text>
<path d="M237.3,524.0999999999999 H241.3 V524.8 H241 V530.5999999999999 H240 V524.8 H239 V530.5999999999999 H238 V527.4 C236.7,527.4 236,526.5999999999999 236,525.8 C236,524.9 236.6,524.0999999999999 237.3,524.0999999999999 Z" fill="#767676"/>
<text x="242.6" y="530.5999999999999" font-family="Liberation Sans" font-size="12" fill="#767676" textLength="5.3" lengthAdjust="spacingAndGlyphs" font-weight="bold" >a</text>
<rect x="236" y="532.1999999999999" width="12" height="1.6" fill="#767676" />
<rect x="-2" y="420.2" width="252.5" height="17.2" fill="none" stroke="#2b579a" stroke-width="2"/>
<path d="M292.8,145.8 V151.3 H298.3" fill="none" stroke="#444" stroke-width="1.6"/>
<rect x="477" y="145.8" width="1" height="5" fill="#3a3a3a" />
<rect x="489" y="146.9" width="1" height="2" fill="#3a3a3a" />
<rect x="501" y="146.9" width="1" height="2" fill="#3a3a3a" />
<rect x="513" y="146.9" width="1" height="2" fill="#3a3a3a" />
<rect x="525" y="145.8" width="1" height="5" fill="#3a3a3a" />
<rect x="537" y="146.9" width="1" height="2" fill="#3a3a3a" />
<rect x="549" y="146.9" width="1" height="2" fill="#3a3a3a" />
<rect x="561" y="146.9" width="1" height="2" fill="#3a3a3a" />
<rect x="573" y="145.8" width="1" height="5" fill="#3a3a3a" />
<rect x="585" y="146.9" width="1" height="2" fill="#3a3a3a" />
<rect x="597" y="146.9" width="1" height="2" fill="#3a3a3a" />
<rect x="609" y="146.9" width="1" height="2" fill="#3a3a3a" />
<rect x="621" y="145.8" width="1" height="5" fill="#3a3a3a" />
<rect x="633" y="146.9" width="1" height="2" fill="#3a3a3a" />
<rect x="645" y="146.9" width="1" height="2" fill="#3a3a3a" />
<rect x="657" y="146.9" width="1" height="2" fill="#3a3a3a" />
<text x="669.6" y="151.1" font-family="Liberation Sans" font-size="9.6" fill="#3a3a3a" text-anchor="middle" stroke="#3a3a3a" stroke-width="0.15" >1</text>
<rect x="681" y="146.9" width="1" height="2" fill="#3a3a3a" />
<rect x="693" y="146.9" width="1" height="2" fill="#3a3a3a" />
<rect x="705" y="146.9" width="1" height="2" fill="#3a3a3a" />
<rect x="717" y="145.8" width="1" height="5" fill="#3a3a3a" />
<rect x="729" y="146.9" width="1" height="2" fill="#3a3a3a" />
<rect x="741" y="146.9" width="1" height="2" fill="#3a3a3a" />
<rect x="753" y="146.9" width="1" height="2" fill="#3a3a3a" />
<text x="765.6" y="151.1" font-family="Liberation Sans" font-size="9.6" fill="#3a3a3a" text-anchor="middle" stroke="#3a3a3a" stroke-width="0.15" >2</text>
<rect x="777" y="146.9" width="1" height="2" fill="#3a3a3a" />
<rect x="789" y="146.9" width="1" height="2" fill="#3a3a3a" />
<rect x="801" y="146.9" width="1" height="2" fill="#3a3a3a" />
<rect x="813" y="145.8" width="1" height="5" fill="#3a3a3a" />
<rect x="825" y="146.9" width="1" height="2" fill="#3a3a3a" />
<rect x="837" y="146.9" width="1" height="2" fill="#3a3a3a" />
<rect x="849" y="146.9" width="1" height="2" fill="#3a3a3a" />
<text x="861.6" y="151.1" font-family="Liberation Sans" font-size="9.6" fill="#3a3a3a" text-anchor="middle" stroke="#3a3a3a" stroke-width="0.15" >3</text>
<rect x="873" y="146.9" width="1" height="2" fill="#3a3a3a" />
<rect x="885" y="146.9" width="1" height="2" fill="#3a3a3a" />
<rect x="897" y="146.9" width="1" height="2" fill="#3a3a3a" />
<rect x="909" y="145.8" width="1" height="5" fill="#3a3a3a" />
<rect x="921" y="146.9" width="1" height="2" fill="#3a3a3a" />
<rect x="933" y="146.9" width="1" height="2" fill="#3a3a3a" />
<rect x="945" y="146.9" width="1" height="2" fill="#3a3a3a" />
<text x="957.6" y="151.1" font-family="Liberation Sans" font-size="9.6" fill="#3a3a3a" text-anchor="middle" stroke="#3a3a3a" stroke-width="0.15" >4</text>
<rect x="969" y="146.9" width="1" height="2" fill="#3a3a3a" />
<rect x="981" y="146.9" width="1" height="2" fill="#3a3a3a" />
<rect x="993" y="146.9" width="1" height="2" fill="#3a3a3a" />
<rect x="1005" y="145.8" width="1" height="5" fill="#3a3a3a" />
<rect x="1017" y="146.9" width="1" height="2" fill="#3a3a3a" />
<rect x="1029" y="146.9" width="1" height="2" fill="#3a3a3a" />
<rect x="1041" y="146.9" width="1" height="2" fill="#3a3a3a" />
<text x="1053.6" y="151.1" font-family="Liberation Sans" font-size="9.6" fill="#3a3a3a" text-anchor="middle" stroke="#3a3a3a" stroke-width="0.15" >5</text>
<rect x="1065" y="146.9" width="1" height="2" fill="#3a3a3a" />
<rect x="1077" y="146.9" width="1" height="2" fill="#3a3a3a" />
<rect x="1089" y="146.9" width="1" height="2" fill="#3a3a3a" />
<rect x="1101" y="145.8" width="1" height="5" fill="#3a3a3a" />
<rect x="1113" y="146.9" width="1" height="2" fill="#3a3a3a" />
<rect x="1125" y="146.9" width="1" height="2" fill="#3a3a3a" />
<rect x="1137" y="146.9" width="1" height="2" fill="#3a3a3a" />
<text x="1149.6" y="151.1" font-family="Liberation Sans" font-size="9.6" fill="#3a3a3a" text-anchor="middle" stroke="#3a3a3a" stroke-width="0.15" >6</text>
<rect x="1161" y="146.9" width="1" height="2" fill="#3a3a3a" />
<rect x="1173" y="146.9" width="1" height="2" fill="#3a3a3a" />
<rect x="1185" y="146.9" width="1" height="2" fill="#3a3a3a" />
<rect x="1197" y="145.8" width="1" height="5" fill="#3a3a3a" />
<rect x="1209" y="146.9" width="1" height="2" fill="#3a3a3a" />
<rect x="1221" y="146.9" width="1" height="2" fill="#3a3a3a" />
<rect x="1233" y="146.9" width="1" height="2" fill="#3a3a3a" />
<rect x="295" y="167.9" width="2" height="1.2" fill="#3a3a3a" />
<rect x="295" y="179.9" width="2" height="1.2" fill="#3a3a3a" />
<rect x="295" y="191.9" width="2" height="1.2" fill="#3a3a3a" />
<rect x="293.5" y="203.9" width="5" height="1.2" fill="#3a3a3a" />
<rect x="295" y="215.9" width="2" height="1.2" fill="#3a3a3a" />
<rect x="295" y="227.9" width="2" height="1.2" fill="#3a3a3a" />
<rect x="295" y="239.9" width="2" height="1.2" fill="#3a3a3a" />
<rect x="295" y="263.9" width="2" height="1.2" fill="#3a3a3a" />
<rect x="295" y="275.9" width="2" height="1.2" fill="#3a3a3a" />
<rect x="295" y="287.9" width="2" height="1.2" fill="#3a3a3a" />
<rect x="293.5" y="299.9" width="5" height="1.2" fill="#3a3a3a" />
<rect x="295" y="311.9" width="2" height="1.2" fill="#3a3a3a" />
<rect x="295" y="323.9" width="2" height="1.2" fill="#3a3a3a" />
<rect x="295" y="335.9" width="2" height="1.2" fill="#3a3a3a" />
<text x="0" y="0" font-family="Liberation Sans" font-size="10" fill="#444" text-anchor="middle" transform="translate(299,349) rotate(-90)">1</text>
<rect x="295" y="359.9" width="2" height="1.2" fill="#3a3a3a" />
<rect x="295" y="371.9" width="2" height="1.2" fill="#3a3a3a" />
<rect x="295" y="383.9" width="2" height="1.2" fill="#3a3a3a" />
<rect x="293.5" y="395.9" width="5" height="1.2" fill="#3a3a3a" />
<rect x="295" y="407.9" width="2" height="1.2" fill="#3a3a3a" />
<rect x="295" y="419.9" width="2" height="1.2" fill="#3a3a3a" />
<rect x="295" y="431.9" width="2" height="1.2" fill="#3a3a3a" />
<text x="0" y="0" font-family="Liberation Sans" font-size="10" fill="#444" text-anchor="middle" transform="translate(299,445) rotate(-90)">2</text>
<rect x="295" y="455.9" width="2" height="1.2" fill="#3a3a3a" />
<rect x="295" y="467.9" width="2" height="1.2" fill="#3a3a3a" />
<rect x="295" y="479.9" width="2" height="1.2" fill="#3a3a3a" />
<rect x="293.5" y="491.9" width="5" height="1.2" fill="#3a3a3a" />
<rect x="295" y="503.9" width="2" height="1.2" fill="#3a3a3a" />
<rect x="295" y="515.9" width="2" height="1.2" fill="#3a3a3a" />
<path d="M567.5,154.5 V150.2 L573,147 L578.5,150.2 V154.5 Z M567.5,154.5 V160.5 H578.5 V154.5" fill="#fff" stroke="#666" stroke-width="1"/>
<path d="M615.5,139.5 H626.5 V143.7 L621,146.6 L615.5,143.7 Z" fill="#fff" stroke="#666" stroke-width="1"/><rect x="620.5" y="146.5" width="1.2" height="4.3" fill="#555"/>
<path d="M1191.5,154.2 V150.2 L1197,146.6 L1202.5,150.2 V154.2 Z" fill="#fff" stroke="#666" stroke-width="1"/>
<text x="881.9" y="266.6" font-family="Liberation Serif" font-size="14.67" fill="#7c7c7c" stroke="#7c7c7c" stroke-width="0.35" >ii</text>
<text x="890.2" y="267" font-family="Liberation Serif" font-size="15.5" fill="#8a8a8a" >¶</text>
<text x="573.5" y="285.5" font-family="Liberation Serif" font-size="16" fill="#3a3a3a" >¶</text>
<text x="836.6" y="304.2" font-family="Liberation Serif" font-size="16" fill="#000000" stroke="#000000" stroke-width="0.2" >DEDICATION</text>
<text x="933.5" y="304.2" font-family="Liberation Serif" font-size="16" fill="#3a3a3a" >¶</text>
<text x="622" y="354.6" font-family="Liberation Serif" font-size="16" fill="#000000" stroke="#000000" stroke-width="0.2">Delete<tspan font-size="12" letter-spacing="0.004" baseline-shift="1.3" stroke-width="0">·</tspan>if<tspan font-size="12" letter-spacing="0.004" baseline-shift="1.3" stroke-width="0">·</tspan>not<tspan font-size="12" letter-spacing="0.004" baseline-shift="1.3" stroke-width="0">·</tspan>using.<tspan fill='#3a3a3a'>¶</tspan></text>
<path d="M593,349.6 H601.5 M598,346.8 L601.8,349.6 L598,352.40000000000003" fill="none" stroke="#555" stroke-width="1.3"/>
<text x="622" y="372.93" font-family="Liberation Serif" font-size="16" fill="#000000" stroke="#000000" stroke-width="0.2">Dedication<tspan font-size="12" letter-spacing="0.004" baseline-shift="1.3" stroke-width="0">·</tspan>may<tspan font-size="12" letter-spacing="0.004" baseline-shift="1.3" stroke-width="0">·</tspan>be<tspan font-size="12" letter-spacing="0.004" baseline-shift="1.3" stroke-width="0">·</tspan>no<tspan font-size="12" letter-spacing="0.004" baseline-shift="1.3" stroke-width="0">·</tspan>longer<tspan font-size="12" letter-spacing="0.004" baseline-shift="1.3" stroke-width="0">·</tspan>than<tspan font-size="12" letter-spacing="0.004" baseline-shift="1.3" stroke-width="0">·</tspan>one<tspan font-size="12" letter-spacing="0.004" baseline-shift="1.3" stroke-width="0">·</tspan>page<tspan font-size="12" letter-spacing="0.004" baseline-shift="1.3" stroke-width="0">·</tspan>and<tspan font-size="12" letter-spacing="0.004" baseline-shift="1.3" stroke-width="0">·</tspan>should<tspan font-size="12" letter-spacing="0.004" baseline-shift="1.3" stroke-width="0">·</tspan>precede<tspan font-size="12" letter-spacing="0.004" baseline-shift="1.3" stroke-width="0">·</tspan>the<tspan font-size="12" letter-spacing="0.004" baseline-shift="1.3" stroke-width="0">·</tspan>acknowledgments<tspan font-size="12" letter-spacing="0.004" baseline-shift="1.3" stroke-width="0">·</tspan></text>
<text x="573.8" y="391.26" font-family="Liberation Serif" font-size="16" fill="#000000" stroke="#000000" stroke-width="0.2">page.<tspan fill='#3a3a3a'>¶</tspan></text>
<text x="622" y="409.59000000000003" font-family="Liberation Serif" font-size="16" fill="#000000" stroke="#000000" stroke-width="0.2">The<tspan font-size="12" letter-spacing="0.004" baseline-shift="1.3" stroke-width="0">·</tspan>“Front<tspan font-size="12" letter-spacing="0.004" baseline-shift="1.3" stroke-width="0">·</tspan>Matter<tspan font-size="12" letter-spacing="0.004" baseline-shift="1.3" stroke-width="0">·</tspan>Title”<tspan font-size="12" letter-spacing="0.004" baseline-shift="1.3" stroke-width="0">·</tspan>accessibility<tspan font-size="12" letter-spacing="0.004" baseline-shift="1.3" stroke-width="0">·</tspan>style<tspan font-size="12" letter-spacing="0.004" baseline-shift="1.3" stroke-width="0">·</tspan>is<tspan font-size="12" letter-spacing="0.004" baseline-shift="1.3" stroke-width="0">·</tspan>used<tspan font-size="12" letter-spacing="0.004" baseline-shift="1.3" stroke-width="0">·</tspan>on<tspan font-size="12" letter-spacing="0.004" baseline-shift="1.3" stroke-width="0">·</tspan>this<tspan font-size="12" letter-spacing="0.004" baseline-shift="1.3" stroke-width="0">·</tspan>page’s<tspan font-size="12" letter-spacing="0.004" baseline-shift="1.3" stroke-width="0">·</tspan>title.<tspan font-size="12" letter-spacing="0.004" baseline-shift="1.3" stroke-width="0">·</tspan>There<tspan font-size="12" letter-spacing="0.004" baseline-shift="1.3" stroke-width="0">·</tspan>is<tspan font-size="12" letter-spacing="0.004" baseline-shift="1.3" stroke-width="0">·</tspan>no<tspan font-size="12" letter-spacing="0.004" baseline-shift="1.3" stroke-width="0">·</tspan>space<tspan font-size="12" letter-spacing="0.004" baseline-shift="1.3" stroke-width="0">·</tspan></text>
<path d="M593,404.59000000000003 H601.5 M598,401.79 L601.8,404.59000000000003 L598,407.39000000000004" fill="none" stroke="#555" stroke-width="1.3"/>
<text x="573.8" y="427.92" font-family="Liberation Serif" font-size="16" fill="#000000" stroke="#000000" stroke-width="0.2">above<tspan font-size="12" letter-spacing="0.004" baseline-shift="1.3" stroke-width="0">·</tspan>the<tspan font-size="12" letter-spacing="0.004" baseline-shift="1.3" stroke-width="0">·</tspan>title<tspan font-size="12" letter-spacing="0.004" baseline-shift="1.3" stroke-width="0">·</tspan>and<tspan font-size="12" letter-spacing="0.004" baseline-shift="1.3" stroke-width="0">·</tspan>a<tspan font-size="12" letter-spacing="0.004" baseline-shift="1.3" stroke-width="0">·</tspan>triple<tspan font-size="12" letter-spacing="0.004" baseline-shift="1.3" stroke-width="0">·</tspan>space<tspan font-size="12" letter-spacing="0.004" baseline-shift="1.3" stroke-width="0">·</tspan>below.<tspan fill='#3a3a3a'>¶</tspan></text>
<text x="622" y="446.25" font-family="Liberation Serif" font-size="16" fill="#000000" stroke="#000000" stroke-width="0.2">Paragraphs<tspan font-size="12" letter-spacing="0.004" baseline-shift="1.3" stroke-width="0">·</tspan>on<tspan font-size="12" letter-spacing="0.004" baseline-shift="1.3" stroke-width="0">·</tspan>this<tspan font-size="12" letter-spacing="0.004" baseline-shift="1.3" stroke-width="0">·</tspan>page<tspan font-size="12" letter-spacing="0.004" baseline-shift="1.3" stroke-width="0">·</tspan>are<tspan font-size="12" letter-spacing="0.004" baseline-shift="1.3" stroke-width="0">·</tspan>left<tspan font-size="12" letter-spacing="0.004" baseline-shift="1.3" stroke-width="0">·</tspan>aligned<tspan font-size="12" letter-spacing="0.004" baseline-shift="1.3" stroke-width="0">·</tspan>or<tspan font-size="12" letter-spacing="0.004" baseline-shift="1.3" stroke-width="0">·</tspan>justified,<tspan font-size="12" letter-spacing="0.004" baseline-shift="1.3" stroke-width="0">·</tspan>with<tspan font-size="12" letter-spacing="0.004" baseline-shift="1.3" stroke-width="0">·</tspan>the<tspan font-size="12" letter-spacing="0.004" baseline-shift="1.3" stroke-width="0">·</tspan>first<tspan font-size="12" letter-spacing="0.004" baseline-shift="1.3" stroke-width="0">·</tspan>line<tspan font-size="12" letter-spacing="0.004" baseline-shift="1.3" stroke-width="0">·</tspan>indented,<tspan font-size="12" letter-spacing="0.004" baseline-shift="1.3" stroke-width="0">·</tspan>and<tspan font-size="12" letter-spacing="0.004" baseline-shift="1.3" stroke-width="0">·</tspan></text>
<text x="573.8" y="464.58000000000004" font-family="Liberation Serif" font-size="16" fill="#000000" stroke="#000000" stroke-width="0.2">single<tspan font-size="12" letter-spacing="0.004" baseline-shift="1.3" stroke-width="0">·</tspan>spaced.<tspan font-size="12" letter-spacing="0.004" baseline-shift="1.3" stroke-width="0">·</tspan>There<tspan font-size="12" letter-spacing="0.004" baseline-shift="1.3" stroke-width="0">·</tspan>should<tspan font-size="12" letter-spacing="0.004" baseline-shift="1.3" stroke-width="0">·</tspan>be<tspan font-size="12" letter-spacing="0.004" baseline-shift="1.3" stroke-width="0">·</tspan>no<tspan font-size="12" letter-spacing="0.004" baseline-shift="1.3" stroke-width="0">·</tspan>additional<tspan font-size="12" letter-spacing="0.004" baseline-shift="1.3" stroke-width="0">·</tspan>space<tspan font-size="12" letter-spacing="0.004" baseline-shift="1.3" stroke-width="0">·</tspan>between<tspan font-size="12" letter-spacing="0.004" baseline-shift="1.3" stroke-width="0">·</tspan>paragraphs.</text>
<rect x="1034.5" y="449.2" width="191.5" height="18.4" fill="#c8c8c8" />
<text x="1226" y="464.58000000000004" font-family="Liberation Serif" font-size="16" fill="#3a3a3a" >¶</text>
<defs><clipPath id="ycl"><path d="M1036,441 C1037,439 1039,438 1042,437.9 C1080,438.5 1180,439.5 1223,439.8 L1223.5,442 C1226,442 1227,443 1227,446 L1226.8,466.5 C1222,469 1215,469.8 1200,469.8 C1170,469.8 1150,465.5 1120,465 L1036,465 Z"/></clipPath></defs>
<path d="M1036,441 C1037,439 1039,438 1042,437.9 C1080,438.5 1180,439.5 1223,439.8 L1223.5,442 C1226,442 1227,443 1227,446 L1226.8,466.5 C1222,469 1215,469.8 1200,469.8 C1170,469.8 1150,465.5 1120,465 L1036,465 Z" fill="#ffe600" style="mix-blend-mode:multiply"/>
<rect x="1034" y="448.8" width="193" height="19" fill="#cbc800" clip-path="url(#ycl)"/>
<path d="M1043,449.3 C1050,449 1055,449.2 1059,449.6 C1054,450.3 1048,450.3 1043,450 Z" fill="#c9c9c9"/>
<path d="M1190.7,457.3 C1200,456 1212,454.8 1222.7,454 L1220,457 C1210,457.6 1200,457.8 1190.7,457.3 Z" fill="#c9c9c9"/>
<line x1="1036" y1="462.5" x2="1099" y2="462.5" stroke="#000" stroke-width="1" stroke-dasharray="1,1" shape-rendering="crispEdges"/>
<line x1="1161" y1="462.5" x2="1226" y2="462.5" stroke="#000" stroke-width="1" stroke-dasharray="1,1" shape-rendering="crispEdges"/>
<text x="1102.3" y="464.7" font-family="Liberation Sans" font-size="11.2" fill="#000" textLength="56.2" lengthAdjust="spacingAndGlyphs" stroke="#000" stroke-width="0.3" >Page Break</text>
<path d="M42,44 C55,42 75,42 88,43 C90,60 89,100 89,118 C80,122 55,122 41,118 C39,95 40,60 42,44 Z" fill="#f9e08a" fill-opacity="0.9" style="mix-blend-mode:multiply"/>
<text x="50" y="90.8" font-family="Liberation Sans" font-size="11.5" fill="#8f7d30" textLength="26" lengthAdjust="spacingAndGlyphs" stroke="#8f7d30" stroke-width="0.25">Page</text>
<text x="48.5" y="106.6" font-family="Liberation Sans" font-size="11.5" fill="#8f7d30" textLength="29" lengthAdjust="spacingAndGlyphs" stroke="#8f7d30" stroke-width="0.25">Break</text>
<path d="M52.5,46 V55.4 H72.5 V46 M52.5,72.8 V63.5 H72.5 V72.8" fill="none" stroke="#86702a" stroke-width="1.1"/>
<line x1="48" y1="59.4" x2="77" y2="59.4" stroke="#72a88e" stroke-width="1.2" stroke-dasharray="3.2,1.8"/>
<path d="M90.3,16.2 C132.1,23.2 148.3,47.4 180.0,70.8 C204.3,95.0 232.8,116.8 246.7,149.2" fill="none" stroke="#383838" stroke-width="1.9" stroke-linecap="round"/>
<path d="M104.2,10.3 C99,12 94,14 90.3,16.2 L108,28.9" fill="none" stroke="#383838" stroke-width="1.9" stroke-linecap="round" stroke-linejoin="round"/>
<path d="M67.7,118.3 C67.2,151.9 96.0,173.6 119.0,193.2" fill="none" stroke="#383838" stroke-width="1.9" stroke-linecap="round"/>
<path d="M57,133.6 L67.7,118.3 L85.8,134.5" fill="none" stroke="#383838" stroke-width="1.9" stroke-linecap="round" stroke-linejoin="round"/>
<path d="M1049.5,528.0 C1057.4,506.3 1066.7,493.8 1069.4,469.7" fill="none" stroke="#000" stroke-width="3.4" stroke-linecap="round"/>
<path d="M1042.9,486.5 C1052,480 1061,473.5 1069.4,470 C1075,476 1080,484 1085.5,491.6" fill="none" stroke="#000" stroke-width="3.4" stroke-linecap="round" stroke-linejoin="round"/>
<rect x="0" y="526" width="1234" height="16" fill="#000000" />
</svg>
</body></html>
